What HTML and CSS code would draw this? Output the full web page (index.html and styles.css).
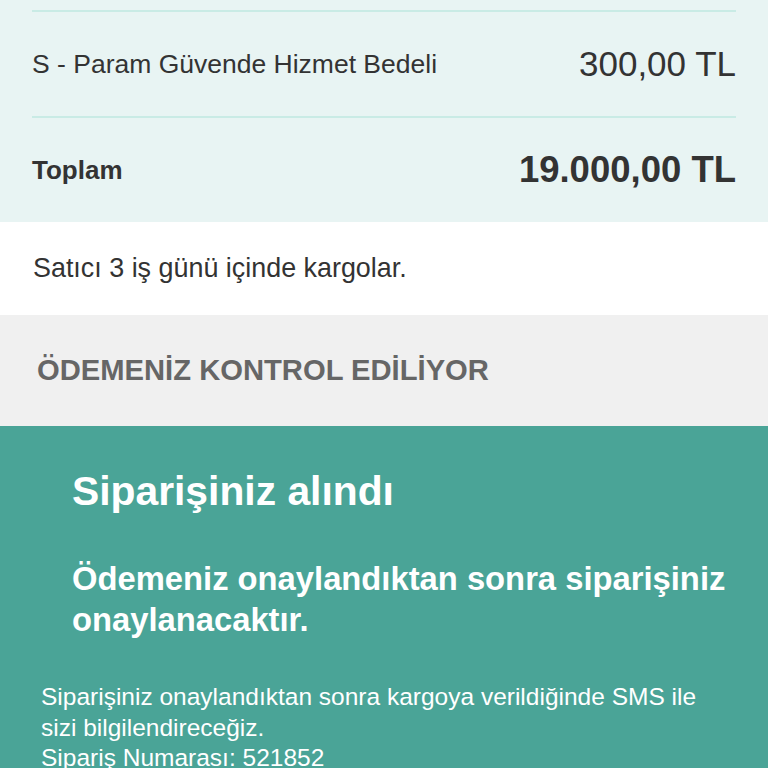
FILE: index.html
```html
<!DOCTYPE html>
<html lang="tr">
<head>
<meta charset="utf-8">
<title>Sipariş</title>
<link rel="stylesheet" href="styles.css">
</head>
<body>
<div class="summary">
  <div class="row">
    <span class="label">S - Param Güvende Hizmet Bedeli</span>
    <span class="amount">300,00 TL</span>
  </div>
  <div class="row">
    <span class="label total-label">Toplam</span>
    <span class="amount total-amount">19.000,00 TL</span>
  </div>
</div>
<div class="shipping">Satıcı 3 iş günü içinde kargolar.</div>
<div class="status">ÖDEMENİZ KONTROL EDİLİYOR</div>
<div class="result">
  <div class="result-head">
    <h1 class="result-title">Siparişiniz alındı</h1>
    <h2 class="result-sub">Ödemeniz onaylandıktan sonra siparişiniz onaylanacaktır.</h2>
  </div>
  <p class="result-text">Siparişiniz onaylandıktan sonra kargoya verildiğinde SMS ile sizi bilgilendireceğiz.<br>Sipariş Numarası: 521852</p>
</div>
</body>
</html>
```

FILE: styles.css
```css
html, body {
  margin: 0;
  padding: 0;
  background: #ffffff;
}
html {
  overflow: hidden;
}
body {
  font-family: "Liberation Sans", Arial, sans-serif;
  color: #333333;
  overflow: hidden;
  height: 768px;
}
.summary {
  background: #e8f4f3;
  padding: 10px 32px 0 32px;
}
.row {
  display: flex;
  justify-content: space-between;
  align-items: center;
  height: 104px;
  border-top: 2px solid #c9ebe5;
}
.label {
  font-size: 26.5px;
  color: #333333;
}
.amount {
  font-size: 35px;
  color: #333333;
}
.total-label {
  font-weight: bold;
  font-size: 26px;
}
.total-amount {
  font-weight: bold;
  font-size: 36.5px;
}
.shipping {
  height: 93px;
  display: flex;
  align-items: center;
  padding-left: 33px;
  font-size: 26.9px;
  color: #333333;
  background: #ffffff;
}
.status {
  height: 111px;
  display: flex;
  align-items: center;
  padding-left: 37px;
  font-size: 29.2px;
  font-weight: bold;
  color: #666666;
  background: #f0f0f0;
}
.result {
  background: #4aa497;
  color: #ffffff;
  padding: 41px 41px 40px 41px;
}
.result-head {
  padding-left: 31px;
}
.result-title {
  margin: 0;
  font-size: 40.8px;
  line-height: 48px;
  font-weight: bold;
}
.result-sub {
  margin: 43px 0 0 0;
  font-size: 32.75px;
  line-height: 41px;
  font-weight: bold;
}
.result-text {
  margin: 42px 0 0 0;
  font-size: 24.5px;
  line-height: 30.5px;
}
```
